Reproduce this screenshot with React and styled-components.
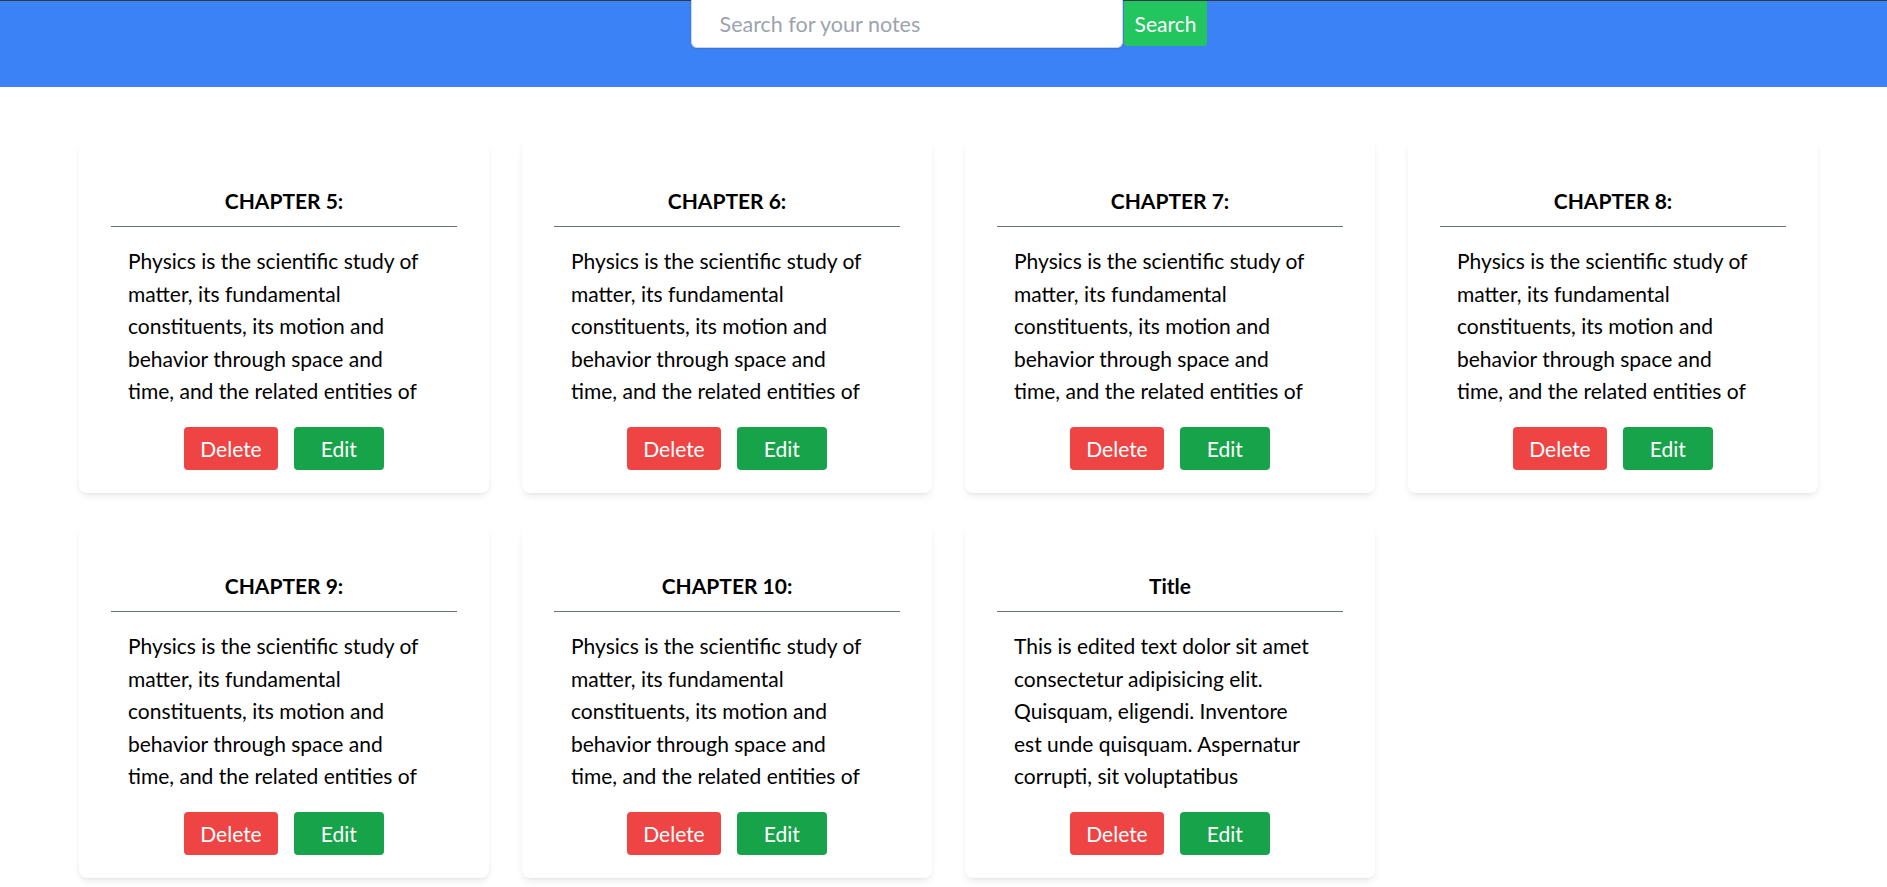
import React from 'react';
import styled, { createGlobalStyle } from 'styled-components';

const GlobalStyle = createGlobalStyle`
  body {
    margin: 0;
    background: #ffffff;
    font-family: Lato, "Open Sans", sans-serif;
  }
`;

const physics =
  'Physics is the scientific study of matter, its fundamental constituents, its motion and behavior through space and time, and the related entities of energy and force.';

const notes = [
  { id: 5, title: 'CHAPTER 5:', body: physics },
  { id: 6, title: 'CHAPTER 6:', body: physics },
  { id: 7, title: 'CHAPTER 7:', body: physics },
  { id: 8, title: 'CHAPTER 8:', body: physics },
  { id: 9, title: 'CHAPTER 9:', body: physics },
  { id: 10, title: 'CHAPTER 10:', body: physics },
  {
    id: 11,
    title: 'Title',
    body: 'This is edited text dolor sit amet consectetur adipisicing elit. Quisquam, eligendi. Inventore est unde quisquam. Aspernatur corrupti, sit voluptatibus accusantium doloremque.',
  },
];

const App = () => {
  return (
    <>
      <GlobalStyle />
      <Header>
        <SearchForm onSubmit={(e) => e.preventDefault()}>
          <SearchInput type="text" placeholder="Search for your notes" />
          <SearchButton type="submit">Search</SearchButton>
        </SearchForm>
      </Header>

      <NotesGrid>
        {notes.map((note) => (
          <Card key={note.id}>
            <CardTitle>{note.title}</CardTitle>
            <Divider />
            <CardBody>{note.body}</CardBody>
            <Actions>
              <ActionButton variant="delete">Delete</ActionButton>
              <ActionButton variant="edit">Edit</ActionButton>
            </Actions>
          </Card>
        ))}
      </NotesGrid>
    </>
  );
};

const Header = styled.header`
  height: 86px;
  background-color: #3b82f6;
  border-top: 1px solid #2d3a45;
  display: flex;
  justify-content: center;
  align-items: flex-start;
`;

const SearchForm = styled.form`
  display: flex;
  align-items: flex-start;
  margin-left: 11px;
`;

const SearchInput = styled.input`
  box-sizing: border-box;
  width: 432px;
  height: 48px;
  margin-top: -1px;
  padding: 0 28px;
  border: 1px solid #d1d5db;
  border-top: none;
  border-radius: 0 0 6px 6px;
  background: #ffffff;
  font-family: Lato, "Open Sans", sans-serif;
  font-size: 21.5px;
  color: #111827;
  outline: none;
  box-shadow: 0 1px 2px rgba(0, 0, 0, 0.12);

  &::placeholder {
    color: #9ca3af;
  }
`;

const SearchButton = styled.button`
  box-sizing: border-box;
  height: 45px;
  margin-left: 1px;
  padding: 0 11px;
  border: none;
  border-radius: 0 0 4px 4px;
  background-color: #22c55e;
  color: #ffffff;
  font-family: Lato, "Open Sans", sans-serif;
  font-size: 21px;
  cursor: pointer;
`;

const NotesGrid = styled.main`
  display: grid;
  grid-template-columns: repeat(4, 410px);
  column-gap: 33px;
  row-gap: 32px;
  padding: 53px 69px 40px 79px;
`;

const Card = styled.article`
  box-sizing: border-box;
  height: 353px;
  padding: 43px 32px 22px;
  background: #ffffff;
  border-radius: 8px;
  box-shadow: 0 4px 8px -2px rgba(0, 0, 0, 0.1), 0 2px 4px -2px rgba(0, 0, 0, 0.06);
  display: flex;
  flex-direction: column;
  align-items: stretch;
`;

const CardTitle = styled.h2`
  margin: 0;
  height: 36px;
  line-height: 36px;
  text-align: center;
  font-size: 21px;
  font-weight: 700;
  color: #000000;
`;

const Divider = styled.hr`
  margin: 7px 0 0;
  border: none;
  border-top: 1.5px solid #6b7280;
`;

const CardBody = styled.p`
  margin: 18px 0 0;
  padding: 0 28px 0 17px;
  height: 162px;
  overflow: hidden;
  font-size: 21px;
  line-height: 32.5px;
  color: #000000;
`;

const Actions = styled.div`
  display: flex;
  justify-content: center;
  gap: 16px;
  margin-top: 20px;
`;

const ActionButton = styled.button`
  height: 43px;
  padding: ${(p) => (p.variant === 'delete' ? '0 16px' : '0 27px')};
  border: none;
  border-radius: 4px;
  background-color: ${(p) => (p.variant === 'delete' ? '#ef4444' : '#16a34a')};
  color: #ffffff;
  font-family: Lato, "Open Sans", sans-serif;
  font-size: 21px;
  cursor: pointer;
`;

export default App;
